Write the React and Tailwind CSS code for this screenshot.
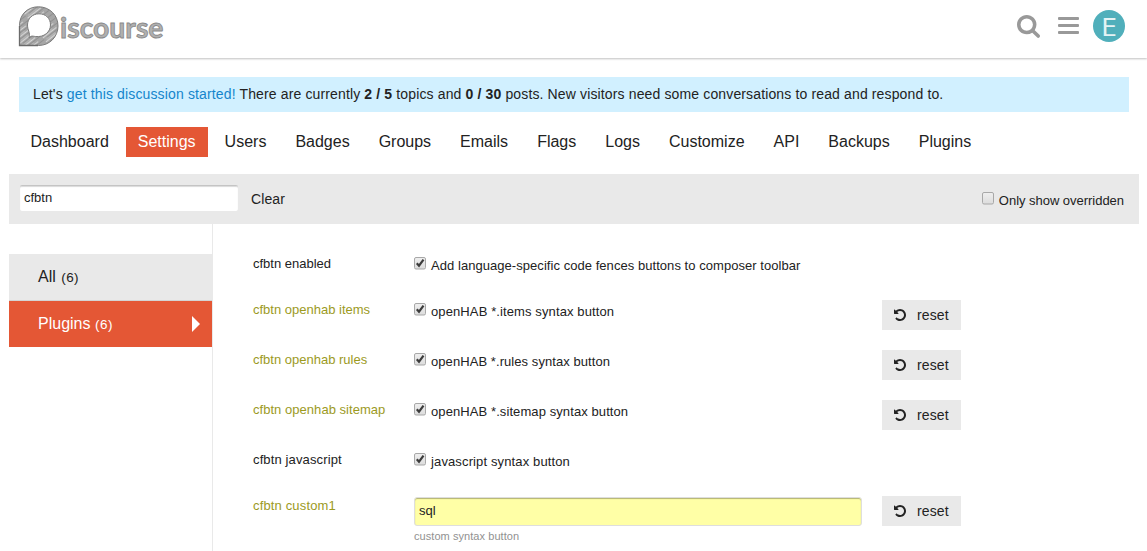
import React from "react";

const NAV = ["Dashboard", "Settings", "Users", "Badges", "Groups", "Emails", "Flags", "Logs", "Customize", "API", "Backups", "Plugins"];

const SETTINGS = [
  { name: "cfbtn enabled", text: "Add language-specific code fences buttons to composer toolbar", changed: false, labelTrack: "", textTrack: "tracking-[0.05px]" },
  { name: "cfbtn openhab items", text: "openHAB *.items syntax button", changed: true, labelTrack: "", textTrack: "tracking-[0.11px]" },
  { name: "cfbtn openhab rules", text: "openHAB *.rules syntax button", changed: true, labelTrack: "", textTrack: "tracking-[0.07px]" },
  { name: "cfbtn openhab sitemap", text: "openHAB *.sitemap syntax button", changed: true, labelTrack: "tracking-[0.04px]", textTrack: "tracking-[0.09px]" },
  { name: "cfbtn javascript", text: "javascript syntax button", changed: false, labelTrack: "tracking-[0.13px]", textTrack: "tracking-[0.13px]" },
];

function Logo() {
  return (
    <svg width="150" height="44" viewBox="0 0 150 44" className="block">
      <defs>
        <pattern id="hatch" width="23" height="5" patternUnits="userSpaceOnUse" patternTransform="rotate(-38)">
          <rect width="23" height="5" fill="#a6a6a6" />
          <rect width="17" height="1" fill="#d4d4d4" />
          <rect x="4" y="2.200" width="19" height="0.800" fill="#8c8c8c" />
          <rect x="2" y="3.600" width="11" height="0.700" fill="#c8c8c8" />
        </pattern>
      </defs>
      <path
        fillRule="evenodd"
        d="M1.500 39.500V19.500C1.500 8.500 9.500 0.800 20.500 0.800S40 9 40 20S31.500 39.500 20.500 39.500ZM11 31.800C13.500 29.200 15 30.300 17.500 30.500C26 31.500 32.500 26 32.500 19C32.500 12 27.500 7.800 21 7.800C14 7.800 9.500 13 9.500 19C9.500 24.500 12.500 26 11 31.800Z"
        fill="url(#hatch)"
        stroke="#7b7b7b"
        strokeWidth="1"
        strokeLinejoin="round"
      />
      <path d="M1.500 20V39.500H20" fill="none" stroke="#6b6b6b" strokeWidth="1.300" />
      <text x="42" y="31.500" textLength="103.500" lengthAdjust="spacingAndGlyphs" fill="#b0b0b0" stroke="#8a8a8a" strokeWidth="0.850" className="font-['Lato',sans-serif] text-[28px] font-bold">
        iscourse
      </text>
    </svg>
  );
}

function SearchIcon() {
  return (
    <svg width="23" height="25" viewBox="0 0 1664 1792" fill="#999" className="block">
      <path d="M1152 832q0-185-131.500-316.500t-316.500-131.500-316.500 131.500-131.500 316.500 131.500 316.500 316.500 131.500 316.500-131.500 131.500-316.500zm512 832q0 52-38 90t-90 38q-54 0-90-38l-343-342q-179 124-399 124-143 0-273.500-55.500t-225-150-150-225-55.500-273.500 55.500-273.500 150-225 225-150 273.500-55.500 273.500 55.500 225 150 150 225 55.500 273.500q0 220-124 399l343 343q37 37 37 90z" />
    </svg>
  );
}

function UndoIcon() {
  return (
    <svg width="12" height="14" viewBox="0 0 1536 1792" fill="#222" className="block">
      <path d="M1536 896q0 156-61 298t-164 245-245 164-298 61q-172 0-327-72.500t-264-204.500q-7-10-6.500-22.500t8.500-20.500l137-138q10-9 25-9 16 2 23 12 73 95 179 147t225 52q104 0 198.500-40.500t163.500-109.500 109.500-163.500 40.500-198.500-40.500-198.500-109.500-163.500-163.500-109.500-198.500-40.500q-98 0-188 35.500t-160 101.500l137 138q31 30 14 69-17 40-59 40h-448q-26 0-45-19t-19-45v-448q0-42 40-59 39-17 69 14l130 129q107-101 244.500-156.500t284.500-55.500q156 0 298 61t245 164 164 245 61 298z" />
    </svg>
  );
}

function Checkbox({ checked }) {
  return (
    <svg width="12" height="13" viewBox="0 0 12 13" className="block shrink-0">
      <defs>
        <linearGradient id="box" x1="0" y1="0" x2="0" y2="1">
          <stop offset="0" stopColor="#efefef" />
          <stop offset="1" stopColor="#dcdcdc" />
        </linearGradient>
      </defs>
      <rect x="0.5" y="0.5" width="11" height="11.500" rx="1.500" fill="url(#box)" stroke="#a8a8a8" />
      {checked && <path d="M2.800 6.200L5 8.700L9.500 2.700" fill="none" stroke="#3c3c3c" strokeWidth="2.200" />}
    </svg>
  );
}

function ResetButton() {
  return (
    <button className="flex h-[30px] w-[79px] items-center bg-[#e9e9e9] pl-3 text-sm text-[#222]">
      <UndoIcon />
      <span className="ml-[11px] leading-5 tracking-[0.1px]">reset</span>
    </button>
  );
}

export default function App() {
  return (
    <div className="h-[551px] overflow-hidden bg-white font-['Liberation_Sans',Arial,sans-serif] text-[#222]">
      <header className="flex h-[58px] justify-between pl-[18px] pr-[22px] shadow-[0_1px_2px_rgba(0,0,0,0.25)]">
        <div className="pt-[6px]">
          <Logo />
        </div>
        <div className="flex pt-[10px]">
          <div className="pt-[3px]">
            <SearchIcon />
          </div>
          <div className="ml-[18px] flex w-[21px] flex-col gap-[4px] pt-[7px]">
            <span className="h-[3px] rounded-[1px] bg-[#999]" />
            <span className="h-[3px] rounded-[1px] bg-[#999]" />
            <span className="h-[3px] rounded-[1px] bg-[#999]" />
          </div>
          <div className="ml-[14px] flex size-8 items-center justify-center rounded-full bg-[#50afbb] pb-px font-['Open_Sans',sans-serif] text-[25px] leading-8 text-white">
            <span className="inline-block scale-x-[1.150] font-normal text-white/85">E</span>
          </div>
        </div>
      </header>

      <div className="ml-[19px] mt-[19px] flex h-[35px] w-[1110px] items-center bg-[#d1f0ff] pb-[2px] pl-[14px] text-sm">
        <p className="whitespace-nowrap tracking-[0.137px]">
          Let's <a className="text-[#1485cc]">get this discussion started!</a> There are currently <b>2 / 5</b> topics and <b>0 / 30</b> posts. New visitors need some conversations to read and respond to.
        </p>
      </div>

      <nav className="mt-[15px] flex gap-[5px] pl-[18.500px]">
        {NAV.map((item) => (
          <a key={item} className={item === "Settings" ? "h-[30px] bg-[#e45735] px-3 text-base leading-[30px] text-white" : "h-[30px] px-3 text-base leading-[30px]"}>
            {item}
          </a>
        ))}
      </nav>

      <div className="mx-[9px] mt-[17px] flex h-[50px] w-[1130px] bg-[#e9e9e9] pl-[11px] pr-[15px]">
        <div className="mt-[11px] h-[26px] w-[218px] rounded-[2px] border-t border-[#c4c4c4] bg-white pl-1 text-[13px] leading-[23px] shadow-[inset_0_1px_1px_rgba(0,0,0,0.15)]">cfbtn</div>
        <span className="ml-[13px] mt-[15px] text-sm leading-5 tracking-[0.1px]">Clear</span>
        <label className="ml-auto flex pt-[18px]">
          <Checkbox />
          <span className="ml-[5px] text-[13px] leading-[17px] tracking-[-0.03px]">Only show overridden</span>
        </label>
      </div>

      <div className="flex h-[327px]">
        <aside className="w-[213px] border-r border-[#e9e9e9] pl-[9px] pt-[30px]">
          <div className="h-[47px] border-b border-[#d4d4d4] bg-[#e9e9e9] pl-[29px] text-base leading-[46px]">
            All <span className="ml-px text-[13.500px] tracking-[0.4px]">(6)</span>
          </div>
          <div className="flex h-[46px] items-center justify-between bg-[#e45735] pl-[29px] pr-[12px] text-base leading-[46px] text-white">
            <span>
              Plugins <span className="text-[13.500px] tracking-[0.5px]">(6)</span>
            </span>
            <svg width="8" height="16" viewBox="0 0 8 16" fill="#fff">
              <path d="M0 0L8 8L0 16Z" />
            </svg>
          </div>
        </aside>

        <main className="pl-10 pt-[30px] text-[13px]">
          {SETTINGS.map((s) => (
            <div key={s.name} className={s.name === "cfbtn enabled" || s.name === "cfbtn javascript" ? "flex h-[46px]" : "flex h-[50px]"}>
              <div className={s.changed ? "w-[161px] leading-5 text-[#9c9a1e]" : "w-[161px] leading-5"}>
                <span className={s.labelTrack}>{s.name}</span>
              </div>
              <div className="flex w-[468px] pt-[3px] leading-[18px]">
                <Checkbox checked />
                <div className="ml-[5px]">
                  <span className={s.textTrack}>{s.text}</span>
                </div>
              </div>
              {s.changed && <ResetButton />}
            </div>
          ))}
          <div className="flex">
            <div className="w-[161px] leading-5 tracking-[0.15px] text-[#9c9a1e]">cfbtn custom1</div>
            <div className="w-[468px]">
              <div className="mt-px h-[29px] w-[448px] rounded-[3px] border border-[#dedede] bg-[#ffffa6] pl-1 leading-[25px] shadow-[inset_0_1px_1px_rgba(0,0,0,0.3)]">sql</div>
              <div className="mt-[2px] text-[11px] leading-4 tracking-[0.06px] text-[#919191]">custom syntax button</div>
            </div>
            <ResetButton />
          </div>
        </main>
      </div>
    </div>
  );
}
